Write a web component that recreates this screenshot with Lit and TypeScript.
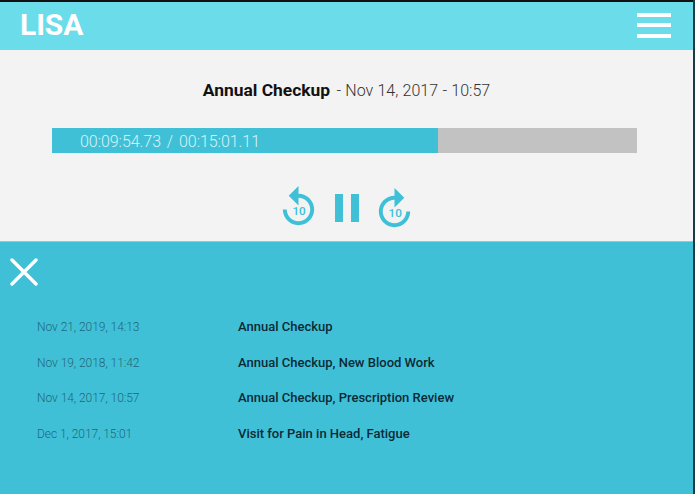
import { LitElement, html, css, svg } from "lit";
import { customElement } from "lit/decorators.js";

const rows = [
  ["Nov 21, 2019, 14:13", "Annual Checkup"],
  ["Nov 19, 2018, 11:42", "Annual Checkup, New Blood Work"],
  ["Nov 14, 2017, 10:57", "Annual Checkup, Prescription Review"],
  ["Dec 1, 2017, 15:01", "Visit for Pain in Head, Fatigue"],
];

const arc = svg`<path d="M12 5V1L7 6l5 5V7c3.3 0 6 2.7 6 6s-2.7 6-6 6-6-2.7-6-6H4c0 4.4 3.6 8 8 8s8-3.6 8-8-3.6-8-8-8z"/>`;

@customElement("app-root")
export class AppRoot extends LitElement {
  static styles = css`
    :host {
      display: block;
      width: 695px;
      height: 494px;
      overflow: hidden;
      font-family: Roboto, "Liberation Sans", sans-serif;
      background: #40c0d7;
    }
    .frame { display: flex; flex-direction: column; height: 494px; border-right: 2px solid #1c3b44; box-sizing: border-box; }
    header {
      height: 50px; box-sizing: border-box; background: #6adcea; border-top: 2px solid #111;
      display: flex; align-items: center; justify-content: space-between; padding: 0 22px 0 20px;
    }
    .logo { color: #fff; font-size: 30px; font-weight: 700; letter-spacing: -0.1px; line-height: 1; margin-top: -3px; }
    .menu { display: flex; flex-direction: column; gap: 6.5px; width: 34px; margin-top: -2px; }
    .menu span { display: block; height: 4px; background: #fff; }
    .player { height: 191px; background: #f3f3f3; display: flex; flex-direction: column; }
    .title { margin-top: 29px; height: 22px; line-height: 22px; text-align: center; font-size: 16px; color: #333; font-weight: 300; word-spacing: 0.4px; }
    .title b { color: #111; font-weight: 700; font-size: 17.4px; word-spacing: 0; margin-right: 2px; }
    .bar { margin: 27px 56px 0 52px; height: 25px; background: #c2c2c2; display: flex; }
    .fill { background: #40c0d7; color: #d5f3f8; font-size: 16px; font-weight: 300; line-height: 27px; padding-left: 28px; box-sizing: border-box; white-space: nowrap; letter-spacing: -0.05px; word-spacing: 2px; }
    .controls { display: flex; justify-content: center; align-items: flex-start; margin-top: 31px; }
    .controls svg { display: block; width: 47px; height: 47px; fill: #40c0d7; }
    .controls text { fill: #40c0d7; font: 500 6px Roboto, sans-serif; text-anchor: middle; }
    .fwd { margin-top: 2px; }
    .fwd g.mirror { transform: translateX(24px) scaleX(-1); }
    .pause { display: flex; gap: 8px; margin: 10px 12px 0 13px; }
    .pause span { display: block; width: 8px; height: 28px; background: #40c0d7; }
    .panel { flex: 1; background: #40c0d7; border-top: 1px solid #7ad3e3; box-sizing: border-box; }
    .close { display: block; margin: 14px 0 0 9px; width: 30px; height: 30px; stroke: #fff; stroke-width: 3.4; stroke-linecap: round; }
    .list { margin: 31px 0 0 37px; display: grid; grid-template-columns: 201px 1fr; row-gap: 15.5px; font-size: 13px; line-height: 20px; }
    .date { color: #1e6877; font-weight: 300; font-size: 12px; letter-spacing: -0.05px; }
    .name { color: #0b2a36; font-weight: 500; }
  `;

  render() {
    return html`
      <div class="frame">
        <header>
          <div class="logo">LISA</div>
          <div class="menu"><span></span><span></span><span></span></div>
        </header>
        <section class="player">
          <div class="title"><b>Annual Checkup</b> - Nov 14, 2017 - 10:57</div>
          <div class="bar">
            <div class="fill" style="width:${(385.5 / 585) * 100}%">00:09:54.73 / 00:15:01.11</div>
          </div>
          <div class="controls">
            <svg viewBox="0 0 24 24">${arc}<text x="12.3" y="16">10</text></svg>
            <div class="pause"><span></span><span></span></div>
            <svg class="fwd" viewBox="0 0 24 24"><g class="mirror">${arc}</g><text x="12.4" y="16">10</text></svg>
          </div>
        </section>
        <section class="panel">
          <svg class="close" viewBox="0 0 30 30"><path d="M3 4 L27 28 M27 4 L3 28"/></svg>
          <div class="list">
            ${rows.map(([d, n]) => html`<div class="date">${d}</div><div class="name">${n}</div>`)}
          </div>
        </section>
      </div>
    `;
  }
}
